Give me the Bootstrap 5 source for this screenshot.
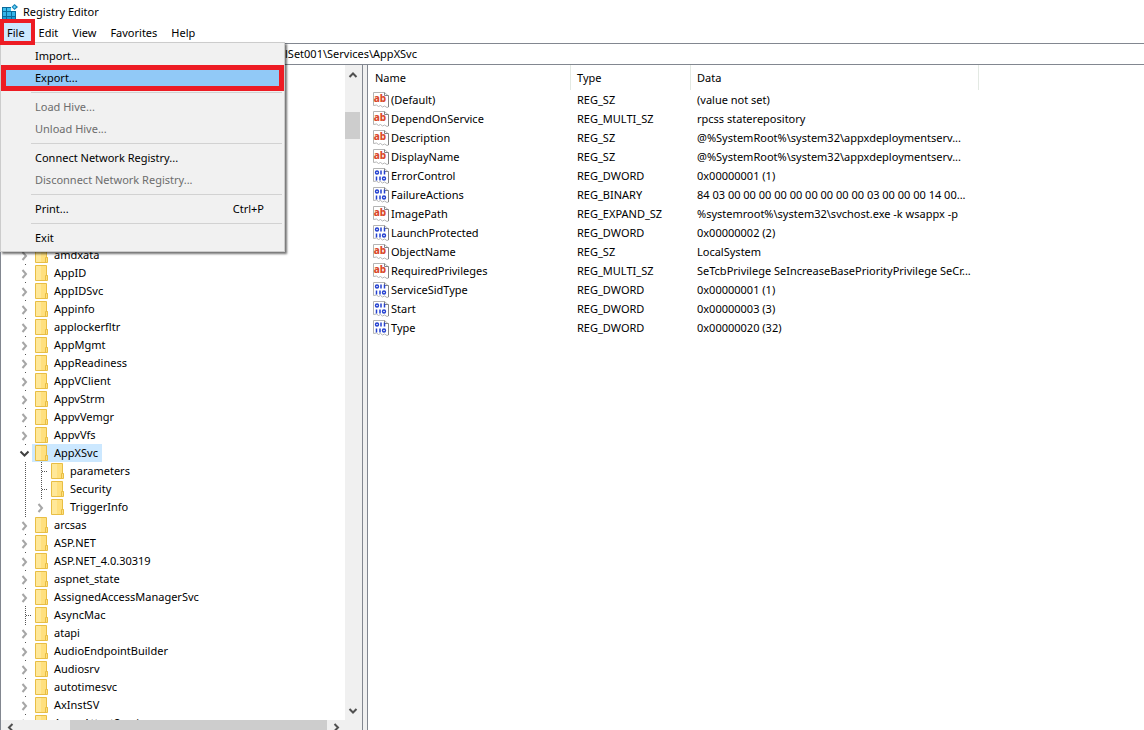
<!DOCTYPE html>
<html lang="en">
<head>
<meta charset="utf-8">
<meta name="viewport" content="width=device-width, initial-scale=1">
<title>Registry Editor</title>
<link href="https://cdn.jsdelivr.net/npm/bootstrap@5.3.0/dist/css/bootstrap.min.css" rel="stylesheet">
<style>
  body { font: 11px/18px "Noto Sans", "Open Sans", sans-serif; color: #000; background: #fff; }
  svg { display: block; flex: none; }
  .title-bar { height: 22px; padding: 2px 2px 0; gap: 4px; }
  .menu-bar { height: 21px; }
  .menu-btn { border: 0; background: none; padding: 0 7px; height: 22px; line-height: 22px; color: #000; }
  .menu-btn.opened { position: relative; z-index: 1001; height: 18px; line-height: 20px; margin: 1px 1px 0 4px; padding: 0 6px 0 3px; background: #cce8ff; outline: 4px solid #ed1c24; }
  .file-menu { --bs-dropdown-min-width: 285px; font-size: 11px; top: 20px; left: 0; margin: 0; padding: 2px; border: 1px solid #ccc; border-radius: 0; background: #f1f1f1; box-shadow: 2px 2px 2px rgba(0,0,0,.55); }
  .file-menu .dropdown-item { height: 22px; line-height: 22px; padding: 0 18px 0 32px; color: #000; }
  .file-menu .dropdown-item:disabled { color: #6d6d6d; }
  .file-menu .dropdown-item.picked { position: relative; background: #91c9f7; outline: 5px solid #ed1c24; outline-offset: -3px; }
  .file-menu .dropdown-divider { margin: 3px 0 3px 28px; border-color: #d2d2d2; opacity: 1; }
  .address { height: 22px; border: solid #828790; border-width: 1px 0 1px 1px; background: #fff; padding: 0 0 2px 284px; line-height: 18px; outline: 0; }
  .tree-pane { width: 363px; border: solid #828790; border-width: 0 1px; }
  .tree-list { padding: 181px 0 0 15px; margin: 0; }
  .tree-row { height: 18px; white-space: nowrap; }
  .tree-label { padding: 0 4px 0 3px; gap: 6px; height: 18px; }
  .tree-label.chosen { background: #cce8ff; }
  .bar-v { width: 17px; background: #f0f0f0; padding: 6px 0 5px 3px; }
  .bar-h { height: 10px; background: #f0f0f0; padding: 3px 19px 0 5px; }
  .thumb-v { width: 15px; height: 27px; margin: 33px 0 0 -3px; background: #cdcdcd; }
  .thumb-h { height: 10px; margin: -3px 4px 0 56px; background: #cdcdcd; }
  .splitter { width: 5px; background: #f0f0f0; border-right: 1px solid #828790; }
  .values { table-layout: fixed; width: 100%; border-collapse: separate; border-spacing: 0; }
  .values th { height: 25px; padding: 0 6px; font-weight: 400; border-right: 1px solid #e3e9e3; }
  .values th:first-child { padding-left: 7px; }
  .values th:last-child { border: 0; }
  .values td { height: 19px; padding: 0 0 0 6px; white-space: nowrap; overflow: hidden; text-overflow: clip; }
  .values td:first-child { padding-left: 5px; }
  .value-name { gap: 2px; }
  .c-name { width: 203px; } .c-type { width: 120px; } .c-data { width: 288px; }
</style>
</head>
<body class="vh-100 d-flex flex-column overflow-hidden">

<svg width="0" height="0" class="position-absolute" aria-hidden="true">
  <symbol id="i-right" viewBox="0 0 16 18"><path d="M6.500 6l3.500 4-3.500 4" fill="none" stroke="#a6a6a6" stroke-width="2"/><path d="M9 0h1v1H9z" fill="#555"/></symbol>
  <symbol id="i-open" viewBox="0 0 16 18"><path d="M4.500 7.500l4 4 4-4" fill="none" stroke="#404040" stroke-width="2"/><path d="M9 0h1v1H9z" fill="#555"/></symbol>
  <symbol id="i-line" viewBox="0 0 16 18"><path d="M9.500 0v18" stroke="#555" stroke-dasharray="1 1"/></symbol>
  <symbol id="i-tee" viewBox="0 0 16 18"><path d="M9.500 0v18M10 9.500h6" fill="none" stroke="#555" stroke-dasharray="1 1"/></symbol>
  <symbol id="i-folder" viewBox="0 0 13 16"><path d="M.5.5h11v10h1v5H.5z" fill="#ffe07e" stroke="#e8be45"/><path d="M1 1h5v14H1z" fill="#ffe899"/><path d="M10.500 15v-4.500h2" fill="none" stroke="#e8be45"/></symbol>
  <symbol id="i-page" viewBox="0 0 16 16"><path d="M.5.5h11l4 3.500v11l-1.500.5-2.500-1.500-2 1-2-1.500-2 1-2-1.500-3 .5z" fill="#fff" stroke="#b4b4b4"/><path d="M11.500.5V3.500h4V15" fill="none" stroke="#858585"/></symbol>
  <symbol id="i-up" viewBox="0 0 10 8"><path d="M1.500 6L5 2.500 8.500 6" fill="none" stroke="#505050" stroke-width="2"/></symbol>
  <symbol id="i-down" viewBox="0 0 10 8"><path d="M1.500 2L5 5.500 8.500 2" fill="none" stroke="#505050" stroke-width="2"/></symbol>
</svg>

<header class="title-bar d-flex align-items-center flex-shrink-0">
  <svg width="17" height="17" viewBox="0 0 17 17" aria-hidden="true">
    <path d="M0 3h9v4h5v10H0z" fill="#0b6a9c"/>
    <path d="M1 4h3v3H1zM5 4h4v3H5z" fill="#3fc0ee"/>
    <path d="M1 8h3v4H1zM5 8h4v4H5zM10 8h3v4h-3z" fill="#35b4e8"/>
    <path d="M1 13h3v3H1zM5 13h4v3H5zM10 13h3v3h-3z" fill="#1e9ad4"/>
    <path d="M12.500 0l3.500 3-3.500 3L9.500 3z" fill="#1583b8"/><path d="M12.500 1.500L14 3l-1.500 1.500L11 3z" fill="#6fd5f7"/>
  </svg>
  <span>Registry Editor</span>
</header>

<nav class="menu-bar d-flex flex-shrink-0">
  <div class="dropdown">
    <button type="button" class="menu-btn opened" aria-expanded="true">File</button>
    <div class="dropdown-menu file-menu show">
      <button type="button" class="dropdown-item">Import...</button>
      <button type="button" class="dropdown-item picked">Export...</button>
      <hr class="dropdown-divider">
      <button type="button" class="dropdown-item" disabled>Load Hive...</button>
      <button type="button" class="dropdown-item" disabled>Unload Hive...</button>
      <hr class="dropdown-divider">
      <button type="button" class="dropdown-item">Connect Network Registry...</button>
      <button type="button" class="dropdown-item" disabled>Disconnect Network Registry...</button>
      <hr class="dropdown-divider">
      <button type="button" class="dropdown-item d-flex justify-content-between"><span>Print...</span><span>Ctrl+P</span></button>
      <hr class="dropdown-divider">
      <button type="button" class="dropdown-item">Exit</button>
    </div>
  </div>
  <button type="button" class="menu-btn">Edit</button>
  <button type="button" class="menu-btn">View</button>
  <button type="button" class="menu-btn">Favorites</button>
  <button type="button" class="menu-btn">Help</button>
</nav>

<input class="address w-100 flex-shrink-0" type="text" aria-label="Address" value="lSet001\Services\AppXSvc">

<main class="d-flex flex-grow-1 overflow-hidden">
  <section class="tree-pane d-flex flex-column flex-shrink-0">
    <div class="d-flex flex-grow-1 overflow-hidden">
      <ul class="tree-list list-unstyled flex-grow-1" id="tree"></ul>
      <div class="bar-v d-flex flex-column flex-shrink-0">
        <svg width="10" height="8"><use href="#i-up"/></svg>
        <div class="thumb-v"></div>
        <svg class="mt-auto" width="10" height="8"><use href="#i-down"/></svg>
      </div>
    </div>
    <div class="bar-h d-flex flex-shrink-0 overflow-hidden">
      <svg width="8" height="10" viewBox="0 0 8 10"><path d="M6.500 1L3 4.500 6.500 8" fill="none" stroke="#505050" stroke-width="2"/></svg>
      <div class="thumb-h flex-grow-1"></div>
      <svg width="12" height="10" viewBox="0 0 12 10"><path d="M3.500 1L7 4.500 3.500 8" fill="none" stroke="#505050" stroke-width="2"/></svg>
    </div>
  </section>
  <div class="splitter flex-shrink-0"></div>
  <section class="flex-grow-1 overflow-hidden">
    <table class="values">
      <colgroup><col class="c-name"><col class="c-type"><col class="c-data"><col></colgroup>
      <thead><tr><th>Name</th><th>Type</th><th>Data</th><th></th></tr></thead>
      <tbody id="values"></tbody>
    </table>
  </section>
</main>

<script src="https://cdn.jsdelivr.net/npm/bootstrap@5.3.0/dist/js/bootstrap.bundle.min.js"></script>
<script>
  const icon = (id, w, h) => `<svg width="${w}" height="${h}" aria-hidden="true"><use href="#i-${id}"/></svg>`;

  // Each key: name, then the guide cells drawn before its folder
  const keys = [
    ['amdxata'], ['AppID'], ['AppIDSvc'], ['Appinfo'], ['applockerfltr'], ['AppMgmt'], ['AppReadiness'],
    ['AppVClient'], ['AppvStrm'], ['AppvVemgr'], ['AppvVfs'], ['AppXSvc', 'open'],
    ['parameters', 'line', 'tee'], ['Security', 'line', 'tee'], ['TriggerInfo', 'line', 'right'],
    ['arcsas'], ['ASP.NET'], ['ASP.NET_4.0.30319'], ['aspnet_state'], ['AssignedAccessManagerSvc'],
    ['AsyncMac', 'tee'], ['atapi'], ['AudioEndpointBuilder'], ['Audiosrv'], ['autotimesvc'], ['AxInstSV'],
    ['AzureAttestService']
  ];
  document.getElementById('tree').innerHTML = keys.map(([name, ...cells]) => {
    const guides = (cells.length ? cells : ['right']).map(c => icon(c, 16, 18)).join('');
    const chosen = cells[0] === 'open' ? ' chosen' : '';
    return `<li class="tree-row d-flex">${guides}<span class="tree-label d-flex align-items-center${chosen}">${icon('folder', 13, 16)}<span>${name}</span></span></li>`;
  }).join('');

  const values = [
    ['(Default)', 'REG_SZ', '(value not set)'],
    ['DependOnService', 'REG_MULTI_SZ', 'rpcss staterepository'],
    ['Description', 'REG_SZ', '@%SystemRoot%\\system32\\appxdeploymentserv...'],
    ['DisplayName', 'REG_SZ', '@%SystemRoot%\\system32\\appxdeploymentserv...'],
    ['ErrorControl', 'REG_DWORD', '0x00000001 (1)'],
    ['FailureActions', 'REG_BINARY', '84 03 00 00 00 00 00 00 00 00 00 03 00 00 00 14 00...'],
    ['ImagePath', 'REG_EXPAND_SZ', '%systemroot%\\system32\\svchost.exe -k wsappx -p'],
    ['LaunchProtected', 'REG_DWORD', '0x00000002 (2)'],
    ['ObjectName', 'REG_SZ', 'LocalSystem'],
    ['RequiredPrivileges', 'REG_MULTI_SZ', 'SeTcbPrivilege SeIncreaseBasePriorityPrivilege SeCr...'],
    ['ServiceSidType', 'REG_DWORD', '0x00000001 (1)'],
    ['Start', 'REG_DWORD', '0x00000003 (3)'],
    ['Type', 'REG_DWORD', '0x00000020 (32)']
  ];
  const textMark = '<text x="7" y="10" font-size="10" fill="#d9482b" font-family="Noto Sans, sans-serif" font-weight="800" text-anchor="middle">ab</text>';
  // Two rows of bits: ring and bars
  const dataMark = '<g fill="none" stroke="#2340d0"><circle cx="4" cy="4.500" r="1.500" stroke-width="1.400"/><path d="M8 2.500v4M11.500 2.500v4M3.500 8.500v4M7 8.500v4" stroke-width="1.500"/><circle cx="11" cy="10.500" r="1.500" stroke-width="1.400"/></g>';
  document.getElementById('values').innerHTML = values.map(([name, type, data]) => {
    const mark = /SZ$/.test(type) ? textMark : dataMark;
    return `<tr><td><span class="value-name d-flex align-items-center"><svg width="16" height="16" viewBox="0 0 16 16" aria-hidden="true"><use href="#i-page" width="16" height="16"/>${mark}</svg>${name}</span></td><td>${type}</td><td>${data}</td><td></td></tr>`;
  }).join('');
</script>
</body>
</html>
